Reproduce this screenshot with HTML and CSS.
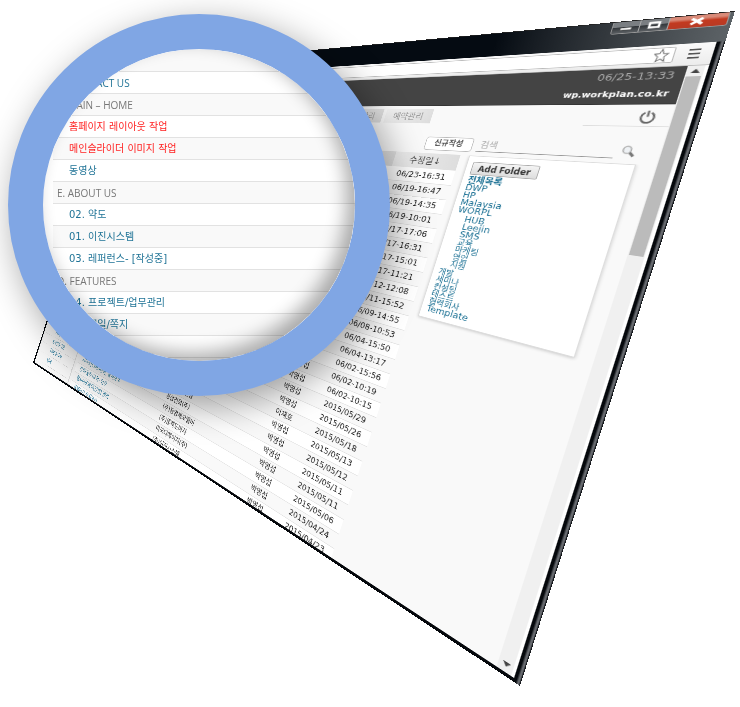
FILE: index.html
```
<!DOCTYPE html>
<html lang="ko">
<head>
<meta charset="utf-8">
<title>Workplan</title>
<link rel="stylesheet" href="styles.css">
</head>
<body>
<main class="stage">
  <section class="window">
    <div class="titlebar">
      <div class="controls">
        <button class="control" aria-label="Minimize"><svg viewBox="0 0 26 15" preserveAspectRatio="none"><path d="M8 8h11v3H8z" fill="#fff" stroke="#444" stroke-width=".6"/></svg></button>
        <button class="control" aria-label="Maximize"><svg viewBox="0 0 26 15" preserveAspectRatio="none"><path d="M9 4.500h9v6H9z" fill="none" stroke="#fff" stroke-width="2.400"/></svg></button>
        <button class="control close" aria-label="Close"><svg viewBox="0 0 46 15" preserveAspectRatio="none"><path d="M18 4l9 7M27 4l-9 7" stroke="#fff" stroke-width="3"/></svg></button>
      </div>
    </div>
    <div class="browser">
      <div class="toolbar">
        <div class="address">
          <svg class="star" viewBox="0 0 20 20" preserveAspectRatio="none"><path d="M10 1.500l2.600 5.800 6.200.6-4.700 4.200 1.400 6.300L10 15.200l-5.500 3.200 1.400-6.300L1.200 7.900l6.200-.6z" fill="#fff" stroke="#777" stroke-width="1.400"/></svg>
        </div>
        <button class="menu" aria-label="Menu"><span></span><span></span><span></span></button>
      </div>
      <div class="viewport">
        <div class="page">
          <header class="site-header">
            <time>06/25-13:33</time>
            <strong>wp.workplan.co.kr</strong>
          </header>
          <nav class="nav">
            <div class="tabs">
              <a class="tab" href="#">업무관리</a>
              <a class="tab" href="#">예약관리</a>
            </div>
            <div class="account">
              <button class="power" aria-label="로그아웃"><svg viewBox="0 0 20 20" preserveAspectRatio="none"><path d="M6 4a8 8 0 1 0 8 0M10 1v9" fill="none" stroke="#666" stroke-width="2.600"/></svg></button>
            </div>
          </nav>
          <form class="tools">
            <button class="new" type="button">신규작성</button>
            <input class="search" type="text" placeholder="검색" aria-label="검색">
            <svg class="lookup" viewBox="0 0 20 20" preserveAspectRatio="none"><path d="M12 12l6 6" stroke="#777" stroke-width="4"/><circle cx="8" cy="8" r="5.500" fill="#eef1f4" stroke="#aaa" stroke-width="2"/></svg>
          </form>
          <div class="columns">
            <ul class="side">
              <li>거래처</li>
              <li>보인게시판</li>
              <li>참여대사서</li>
              <li>날씨</li>
            </ul>
            <table class="tasks">
              <colgroup><col class="c-title"><col class="c-company"><col class="c-name"><col class="c-date"></colgroup>
              <thead><tr><th></th><th></th><th></th><th>수정일↓</th></tr></thead>
              <tbody>
                <tr><td></td><td></td><td></td><td>06/23-16:31</td></tr>
                <tr><td></td><td></td><td></td><td>06/19-16:47</td></tr>
                <tr><td></td><td></td><td></td><td>06/19-14:35</td></tr>
                <tr><td></td><td></td><td></td><td>06/19-10:01</td></tr>
                <tr><td></td><td></td><td></td><td>06/17-17:06</td></tr>
                <tr><td></td><td></td><td></td><td>06/17-16:31</td></tr>
                <tr><td></td><td></td><td></td><td>06/17-15:01</td></tr>
                <tr><td></td><td></td><td></td><td>06/17-11:21</td></tr>
                <tr><td></td><td></td><td></td><td>06/12-12:08</td></tr>
                <tr><td></td><td></td><td></td><td>06/11-15:52</td></tr>
                <tr><td></td><td></td><td></td><td>06/09-14:55</td></tr>
                <tr><td></td><td></td><td></td><td>06/08-10:53</td></tr>
                <tr><td></td><td></td><td></td><td>06/04-15:50</td></tr>
                <tr><td></td><td></td><td></td><td>06/04-13:17</td></tr>
                <tr><td></td><td></td><td>박영섭</td><td>06/02-15:56</td></tr>
                <tr><td></td><td></td><td>박영섭</td><td>06/02-10:19</td></tr>
                <tr><td></td><td></td><td>박영섭</td><td>06/02-10:15</td></tr>
                <tr><td></td><td></td><td>박영섭</td><td>2015/05/29</td></tr>
                <tr><td></td><td></td><td>박영섭</td><td>2015/05/26</td></tr>
                <tr><td></td><td></td><td>이재호</td><td>2015/05/18</td></tr>
                <tr><td></td><td></td><td>박영섭</td><td>2015/05/13</td></tr>
                <tr><td></td><td>(주)대한건설</td><td>박영섭</td><td>2015/05/12</td></tr>
                <tr><td></td><td>경상건화(주)</td><td>박영섭</td><td>2015/05/11</td></tr>
                <tr><td><a href="#">사이트[CMS]관리, 유지보수</a></td><td>(주)동영제오텔비</td><td>박영섭</td><td>2015/05/11</td></tr>
                <tr><td><a href="#">견적[발주]요청- 업무</a></td><td>(주)블랙도마자</td><td>박영섭</td><td>2015/05/06</td></tr>
                <tr><td><a href="#">웹사이트제작[진행] 관리</a></td><td>미국디에이치(주)</td><td>박영섭</td><td>2015/04/24</td></tr>
                <tr><td><a href="#">홈페이지 유지보수</a></td><td>(주)이진시스템</td><td>박영섭</td><td>2015/04/23</td></tr>
              </tbody>
            </table>
            <aside class="folders">
              <button class="add" type="button">Add Folder</button>
              <ul>
                <li><a class="all" href="#">전체목록</a></li>
                <li><a href="#">DWP</a></li>
                <li><a href="#">HP</a></li>
                <li><a href="#">Malaysia</a></li>
                <li><a href="#">WORPL</a>
                  <ul>
                    <li><a href="#">HUB</a></li>
                    <li><a href="#">Leejin</a></li>
                    <li><a href="#">SMS</a></li>
                    <li><a class="ko" href="#">교육</a></li>
                    <li><a class="ko" href="#">마케팅</a></li>
                    <li><a class="ko" href="#">영업</a></li>
                    <li><a class="ko" href="#">지원</a></li>
                  </ul>
                </li>
                <li><a class="ko" href="#">개발</a></li>
                <li><a class="ko" href="#">세미나</a></li>
                <li><a class="ko" href="#">컨설팅</a></li>
                <li><a class="ko" href="#">테스트</a></li>
                <li><a class="ko" href="#">협력회사</a></li>
                <li><a href="#">Template</a></li>
              </ul>
            </aside>
          </div>
        </div>
        <div class="scrollbar">
          <span class="arrow up"></span>
          <span class="thumb"></span>
          <span class="arrow down"></span>
        </div>
      </div>
    </div>
  </section>

  <section class="lens">
    <ul class="zoomed">
      <li></li>
      <li><a class="latin" href="#">CONTACT US</a></li>
      <li class="group">F. MAIN – HOME</li>
      <li><a class="urgent" href="#">홈페이지 레이아웃 작업</a></li>
      <li><a class="urgent" href="#">메인슬라이더 이미지 작업</a></li>
      <li><a href="#">동영상</a></li>
      <li class="group">E. ABOUT US</li>
      <li><a href="#">02. 약도</a></li>
      <li><a href="#">01. 이진시스템</a></li>
      <li><a href="#">03. 레퍼런스- [작성중]</a></li>
      <li class="group">D. FEATURES</li>
      <li><a href="#">04. 프로젝트/업무관리</a></li>
      <li><a href="#">05. 메일/쪽지</a></li>
      <li></li>
    </ul>
  </section>
</main>
</body>
</html>
```
FILE: styles.css
```
* { box-sizing: border-box; }
body {
  margin: 0;
  background: #fff;
  font-family: "DejaVu Sans", "Noto Sans CJK KR", sans-serif;
  font-size: 12px;
}
ul { list-style: none; margin: 0; padding: 0; }
a { color: #1f7396; text-decoration: none; }
button { padding: 0; font-family: inherit; }
svg { display: block; }

.stage { position: relative; min-height: 707px; overflow: hidden; }

/* Browser window, seen in perspective from the right */
.window {
  position: absolute;
  left: 0;
  top: 0;
  width: 1100px;
  height: 800px;
  display: flex;
  flex-direction: column;
  overflow: hidden;
  background: linear-gradient(to right, #05080c 0 1096px, #66696e 1097px 1099px, #15181c 1099px);
  transform-origin: 0 0;
  transform: matrix3d(0.176664, -0.056509, 0, -0.00050917, -0.120125, 0.368675, 0, -0.00000364, 0, 0, 1, 0, 129, 67, 0, 1);
}
.titlebar {
  height: 36px;
  display: flex;
  justify-content: flex-end;
  align-items: flex-start;
  padding-right: 3px;
  border-top: 1px solid #222;
  background: linear-gradient(to right, #050b12 0 78%, #34393e 90%, #5c6266 100%);
}
.controls { display: flex; border: 1px solid #999; border-top: 0; border-radius: 0 0 3px 3px; overflow: hidden; }
.control {
  width: 27px;
  height: 15px;
  border: 0;
  border-right: 1px solid #aaa;
  background: linear-gradient(#7a7e82 0 45%, #33373b 50%, #5c6064);
}
.control svg { width: 100%; height: 100%; }
.close { width: 50px; border-right: 0; background: linear-gradient(#d98a78 0 25%, #c23a20 50%, #b83a24); }

.browser { flex: 1; min-height: 0; margin: 0 7px 4px 5px; display: flex; flex-direction: column; }
.toolbar {
  height: 28px;
  display: flex;
  align-items: center;
  gap: 12px;
  padding: 0 11px 2px 60px;
  background: linear-gradient(#fafafa, #ececec);
  border-bottom: 1px solid #bbb;
}
.address {
  flex: 1;
  height: 20px;
  display: flex;
  align-items: center;
  justify-content: flex-end;
  padding-right: 4px;
  border: 1px solid #bbb;
  border-radius: 2px;
  background: #fff;
}
.star { width: 14px; height: 18px; }
.menu { width: 10px; height: 12px; display: flex; flex-direction: column; justify-content: space-between; border: 0; background: none; }
.menu span { height: 2px; width: 100%; background: #555; }

.viewport { flex: 1; min-height: 0; display: flex; }
.page { flex: 1; display: flex; flex-direction: column; overflow: hidden; background: #f9f9f9; color: #222; }

.site-header {
  display: flex;
  flex-direction: column;
  align-items: flex-end;
  padding-right: 9px;
  background: #444;
  border-bottom: 1px solid #333;
}
.site-header time { line-height: 22px; color: #aaa; }
.site-header strong { line-height: 24px; color: #fff; font-size: 10px; }

.nav { height: 28px; display: flex; justify-content: space-between; align-items: flex-end; }
.tabs { width: 797px; display: flex; justify-content: flex-end; gap: 5px; }
.tab {
  height: 23px;
  padding: 0 13px;
  line-height: 24px;
  font-size: 13px;
  color: #999;
  background: linear-gradient(120deg, #f4f4f4, #dcdcdc);
}
.account { width: 82px; height: 28px; display: flex; justify-content: flex-end; padding: 7px 14px 0 0; border-bottom: 1px solid #ddd; }
.power { width: 15px; height: 17px; border: 0; background: none; }
.power svg { width: 15px; height: 17px; }

.tools { height: 47px; display: flex; justify-content: flex-end; align-items: center; gap: 6px; padding: 15px 22px 0 0; }
.lookup { width: 14px; height: 16px; }
.new {
  width: 67px;
  height: 21px;
  border: 1px solid #bbb;
  border-radius: 4px;
  background: #fff;
  font-size: 11px;
  font-weight: bold;
  line-height: 18px;
  color: #555;
}
.search {
  width: 155px;
  height: 20px;
  padding: 0 4px;
  border: 0;
  border-bottom: 1px solid #999;
  background: none;
  font: inherit;
}
.search::placeholder { color: #aaa; }

.columns { flex: 1; min-height: 0; display: flex; align-items: flex-start; overflow: hidden; }
.side {
  align-self: stretch;
  width: 157px;
  margin-right: 8px;
  display: flex;
  flex-direction: column;
  justify-content: flex-end;
  padding-bottom: 10px;
  border-right: 3px solid #ddd;
}
.side li { height: 24px; padding-left: 36px; line-height: 22px; color: #1f7396; border-bottom: 1px dashed #ccc; }
.side li::before { content: "·"; padding-right: 8px; color: #555; }

.tasks { width: 690px; table-layout: fixed; border-collapse: collapse; margin-right: 12px; }
.c-title { width: 285px; }
.c-company { width: 210px; }
.c-name { width: 100px; }
.tasks th { height: 24px; padding: 0; font-size: 13px; line-height: 22px; font-weight: normal; color: #444; background: linear-gradient(to right, #eee, #ddd); }
.tasks td { height: 22px; padding: 0 0 0 10px; line-height: 18px; border-bottom: 1px solid #e2e2e2; white-space: nowrap; overflow: hidden; }
.tasks td:first-child { padding-left: 16px; }
.tasks td:nth-child(3) { padding: 0 0 0 8px; text-align: center; }
.tasks td:nth-child(4) { padding: 0; text-align: center; }
.tasks tbody tr:nth-child(odd) { background: #fff; }

.folders {
  width: 185px;
  height: 241px;
  padding: 8px 7px;
  border: 1px solid #ddd;
  background: #fff;
  box-shadow: 0 1px 4px rgba(0, 0, 0, 0.2);
}
.folders .add {
  display: block;
  width: 82px;
  height: 19px;
  margin-bottom: 3px;
  border: 1px solid #aaa;
  border-radius: 2px;
  background: linear-gradient(#f4f4f4, #ddd);
  font: bold 12px/16px "Noto Sans", sans-serif;
  color: #333;
}
.folders li { line-height: 11px; }
.folders ul ul { padding: 2px 0 2px 12px; }
.folders .all { font-size: 12px; font-weight: bold; }
.folders .ko { font-size: 11px; }

.scrollbar {
  width: 18px;
  display: flex;
  flex-direction: column;
  align-items: center;
  padding: 4px 3px 6px 0;
  background: linear-gradient(to right, #f0f0f0 0 15px, #fff 15px);
}
.arrow { border: 4px solid transparent; }
.up { border-top: 0; border-bottom: 5px solid #444; }
.down { border-bottom: 0; border-top: 5px solid #444; margin-top: auto; }
.thumb { width: 13px; height: 218px; margin-top: 4px; background: #bbb; }

/* Magnifier */
.lens {
  position: absolute;
  left: 8px;
  top: 14px;
  width: 382px;
  height: 382px;
  border: 35px solid #80a6e4;
  border-radius: 50%;
  overflow: hidden;
  background: #fff;
  box-shadow: 7px 10px 36px rgba(0, 0, 0, 0.38);
}
.lens::after {
  content: "";
  position: absolute;
  inset: 0;
  border-radius: 50%;
  box-shadow: inset -8px -8px 18px rgba(0, 0, 0, 0.32);
}
.zoomed { margin-left: 10px; padding-top: 1px; font-size: 10px; }
.zoomed li { height: 22px; padding-left: 16px; line-height: 22px; border-bottom: 1px solid #e2e2e2; white-space: nowrap; }
.zoomed li:nth-child(odd) { background: #f9f9f9; }
.zoomed .group { padding-left: 4px; font-family: "Open Sans", sans-serif; color: #777; }
.zoomed .latin { font-family: "Open Sans", sans-serif; }
.zoomed .urgent { color: #f22; }
```
